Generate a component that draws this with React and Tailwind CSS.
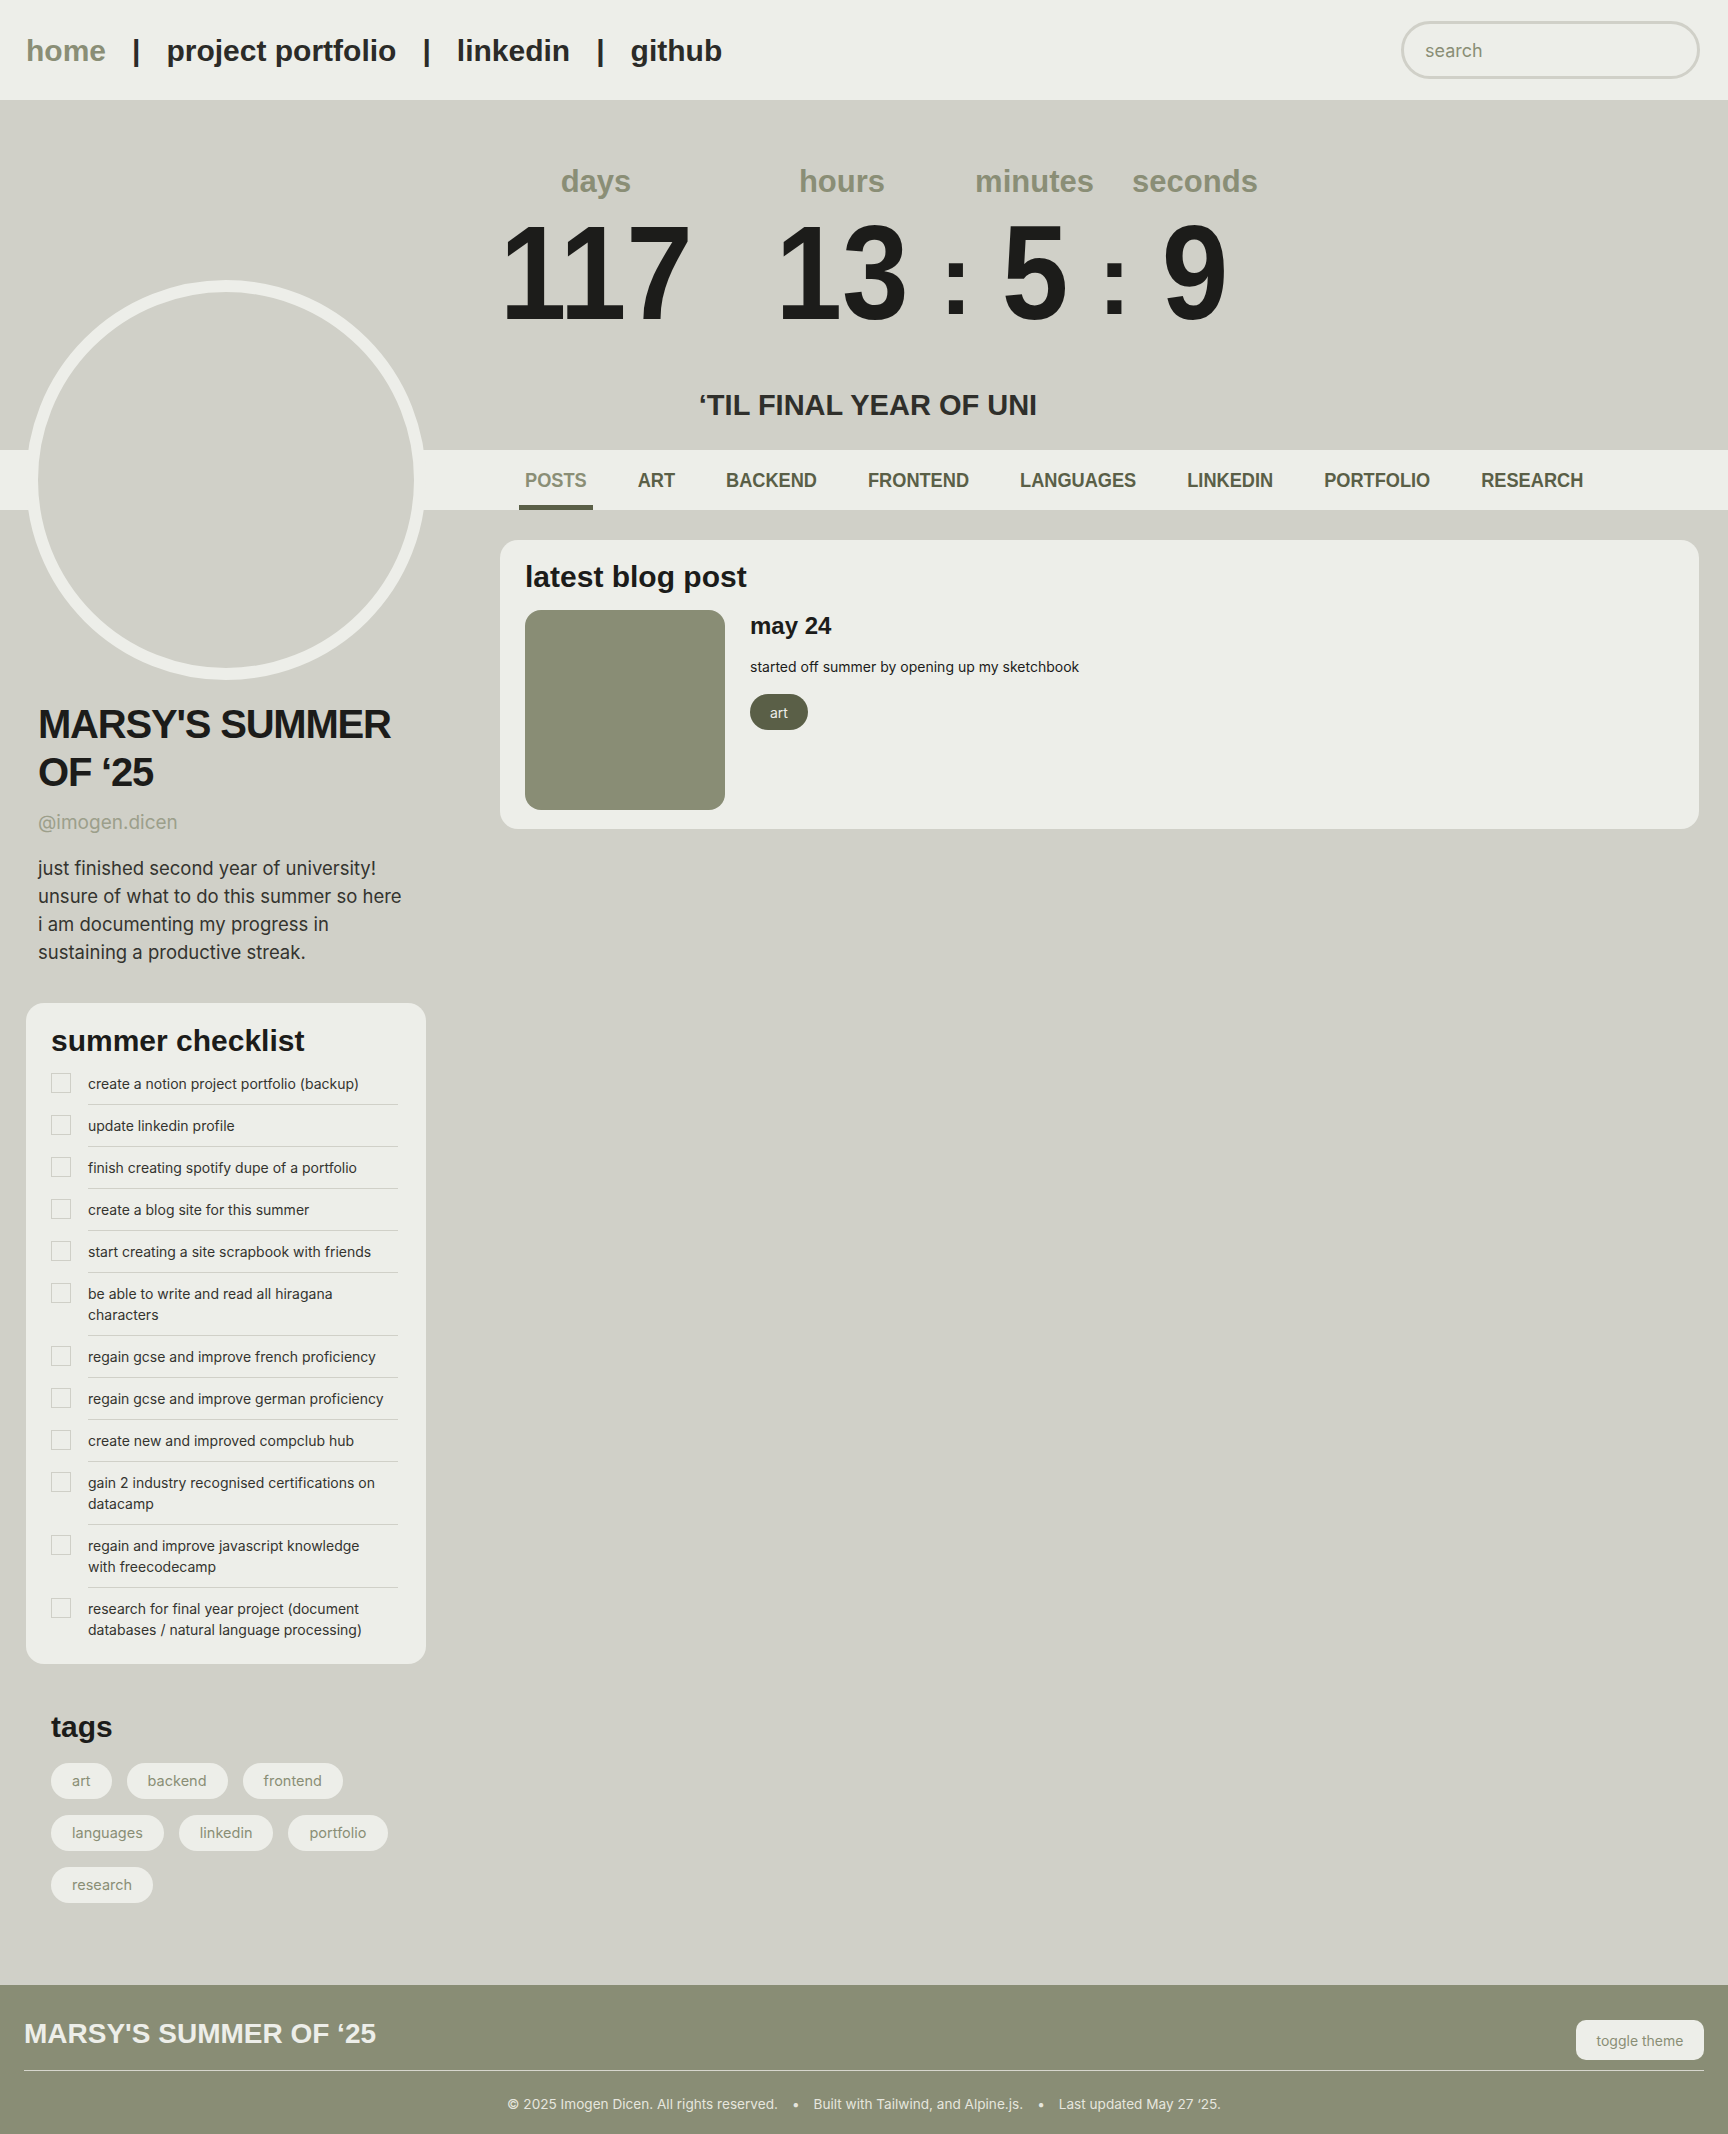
import React from "react";

const HEAD = "font-['Liberation_Sans',Arial,sans-serif] font-bold";
const BODY = "font-['Inter',sans-serif]";

const tabs = ["POSTS", "ART", "BACKEND", "FRONTEND", "LANGUAGES", "LINKEDIN", "PORTFOLIO", "RESEARCH"];

// each entry is a list of lines, as the checklist wraps in the design
const checklist = [
  ["create a notion project portfolio (backup)"],
  ["update linkedin profile"],
  ["finish creating spotify dupe of a portfolio"],
  ["create a blog site for this summer"],
  ["start creating a site scrapbook with friends"],
  ["be able to write and read all hiragana", "characters"],
  ["regain gcse and improve french proficiency"],
  ["regain gcse and improve german proficiency"],
  ["create new and improved compclub hub"],
  ["gain 2 industry recognised certifications on", "datacamp"],
  ["regain and improve javascript knowledge", "with freecodecamp"],
  ["research for final year project (document", "databases / natural language processing)"],
];

const tags = ["art", "backend", "frontend", "languages", "linkedin", "portfolio", "research"];

function Unit({ label, value, className }) {
  return (
    <div className={`flex flex-col items-center ${className}`}>
      <div className={`${HEAD} text-[31px] leading-[36px] text-[#8a8e76]`}>{label}</div>
      <div className={`${HEAD} mt-[7px] text-[133px] leading-[133px] text-[#1c1c1a]`}>
        <span className="inline-block scale-x-[0.9]">{value}</span>
      </div>
    </div>
  );
}

function Colon({ className }) {
  return (
    <div className={`flex flex-col items-center pt-[65px] ${className}`}>
      <div className={`${HEAD} text-[100px] leading-[100px] text-[#1c1c1a]`}>:</div>
    </div>
  );
}

export default function App() {
  return (
    <div className="bg-[#d0d0c8]">
      {/* Header */}
      <header className="flex h-[100px] items-center justify-between bg-[#edeee9] pl-[26px] pr-[28px]">
        <nav className={`${HEAD} flex items-center text-[30px] text-[#2b2b28]`}>
          <a className="text-[#8a8e76]">home</a>
          <span className="mx-[26px]">|</span>
          <a>project portfolio</a>
          <span className="mx-[26px]">|</span>
          <a>linkedin</a>
          <span className="mx-[26px]">|</span>
          <a>github</a>
        </nav>
        <input
          placeholder="search"
          className={`${BODY} h-[58px] w-[299px] rounded-full border-[3px] border-[#d0d0c8] bg-transparent pl-[21px] text-[18px] outline-none placeholder:text-[#8a8e76]`}
        />
      </header>

      {/* Countdown */}
      <section className="pt-[64px] pb-[27px]">
        <div className="flex justify-center pl-[30px]">
          <Unit label="days" value="117" className="w-[190px]" />
          <Unit label="hours" value="13" className="ml-[87px] w-[128px]" />
          <Colon className="ml-[40px] w-[20px]" />
          <Unit label="minutes" value="5" className="ml-[10px] w-[117px]" />
          <Colon className="ml-[12px] w-[19px]" />
          <Unit label="seconds" value="9" className="ml-[9px] w-[124px]" />
        </div>
        <p className={`${HEAD} mt-[47px] pl-[8px] text-center text-[29px] leading-[36px] text-[#2f2f2b]`}>
          ‘TIL FINAL YEAR OF UNI
        </p>
      </section>

      {/* Tabs */}
      <div className="grid grid-cols-[400px_1fr] gap-x-[74px] bg-[#edeee9] pl-[26px] pr-[29px]">
        <div />
        <div className="flex h-[60px] gap-[39px] pl-[19px]">
          {tabs.map((t, i) => (
            <button
              key={t}
              className={`${HEAD} flex h-[60px] items-center border-b-[5px] px-[6px] pt-[7px] text-[18.2px] ${
                i === 0 ? "border-[#5a5f47] text-[#8a8e76]" : "border-transparent text-[#5a5f47]"
              }`}
            >
              <span className="inline-block scale-y-[1.15]">{t}</span>
            </button>
          ))}
        </div>
      </div>

      {/* Body */}
      <div className="grid grid-cols-[400px_1fr] items-start gap-x-[74px] pl-[26px] pr-[29px] pb-[82px]">
        <aside className="relative z-10 -mt-[230px]">
          <div className="h-[400px] w-[400px] rounded-full border-[12px] border-[#edeee9] bg-[#d0d0c8]" />
          <div className="px-[12px]">
            <h1 className={`${HEAD} mt-[20px] text-[40px] leading-[48px] tracking-[-0.03em] text-[#1c1c1a]`}>
              MARSY'S SUMMER OF ‘25
            </h1>
            <p className={`${BODY} mt-[13px] text-[19px] leading-[28px] text-[#9c9f8b]`}>@imogen.dicen</p>
            <p className={`${BODY} mt-[17px] w-[372px] text-[18.5px] leading-[28px] text-[#34342f]`}>
              just finished second year of university! unsure of what to do this summer so here i am documenting my
              progress in sustaining a productive streak.
            </p>
          </div>

          <section className="mt-[37px] rounded-[18px] bg-[#edeee9] px-[25px] pt-[20px] pb-[14px]">
            <h2 className={`${HEAD} text-[30px] leading-[36px] text-[#1c1c1a]`}>summer checklist</h2>
            <ul className="mt-[4px]">
              {checklist.map((lines, i) => (
                <li key={lines[0]} className="flex items-start gap-[17px]">
                  <span className="mt-[10px] h-[20px] w-[20px] shrink-0 border border-[#cfcfc7]" />
                  <span
                    className={`${BODY} mr-[3px] flex-1 whitespace-nowrap py-[10px] text-[14px] leading-[21px] text-[#34342f] ${
                      i === checklist.length - 1 ? "border-b-0" : "border-b border-[#d0d0c8]"
                    }`}
                  >
                    {lines.map((l) => (
                      <span key={l} className="block">
                        {l}
                      </span>
                    ))}
                  </span>
                </li>
              ))}
            </ul>
          </section>

          <section className="mt-[25px] px-[25px] pt-[20px]">
            <h2 className={`${HEAD} text-[30px] leading-[36px] text-[#1c1c1a]`}>tags</h2>
            <div className="mt-[18px] flex flex-wrap gap-x-[15px] gap-y-[16px]">
              {tags.map((t) => (
                <span
                  key={t}
                  className={`${BODY} flex h-[36px] items-center rounded-full bg-[#edeee9] px-[21px] text-[14.5px] text-[#8a8e76]`}
                >
                  {t}
                </span>
              ))}
            </div>
          </section>
        </aside>

        <main className="pt-[30px]">
          <div className="rounded-[18px] bg-[#edeee9] px-[25px] pt-[19px] pb-[19px]">
            <h2 className={`${HEAD} text-[30px] leading-[36px] text-[#1c1c1a]`}>latest blog post</h2>
            <div className="mt-[15px] flex gap-[25px]">
              <div className="h-[200px] w-[200px] shrink-0 rounded-[16px] bg-[#898d75]" />
              <div className="flex flex-col items-start">
                <h3 className={`${HEAD} text-[24px] leading-[32px] text-[#1c1c1a]`}>may 24</h3>
                <p className={`${BODY} mt-[15px] text-[14px] leading-[20px] text-[#1c1c1a]`}>
                  started off summer by opening up my sketchbook
                </p>
                <span
                  className={`${BODY} mt-[17px] flex h-[36px] items-center rounded-full bg-[#5a5f47] px-[20px] text-[14px] text-[#edeee9]`}
                >
                  art
                </span>
              </div>
            </div>
          </div>
        </main>
      </div>

      {/* Footer */}
      <footer className="bg-[#898d75] px-[24px] pt-[31px] pb-[21px]">
        <div className="flex items-start justify-between">
          <div className={`${HEAD} text-[28px] leading-[36px] text-[#edeee9]`}>MARSY'S SUMMER OF ‘25</div>
          <button
            className={`${BODY} mt-[4px] h-[40px] w-[128px] rounded-[10px] bg-[#edeee9] text-[14px] text-[#8a8e76]`}
          >
            toggle theme
          </button>
        </div>
        <div className="mt-[10px] border-t border-[#d6d6cd]" />
        <p className={`${BODY} mt-[23px] text-center text-[13.6px] leading-[20px] text-[#e6e6de]`}>
          © 2025 Imogen Dicen. All rights reserved.
          <span className="mx-[14px]">•</span>
          Built with Tailwind, and Alpine.js.
          <span className="mx-[14px]">•</span>
          Last updated May 27 ‘25.
        </p>
      </footer>
    </div>
  );
}
